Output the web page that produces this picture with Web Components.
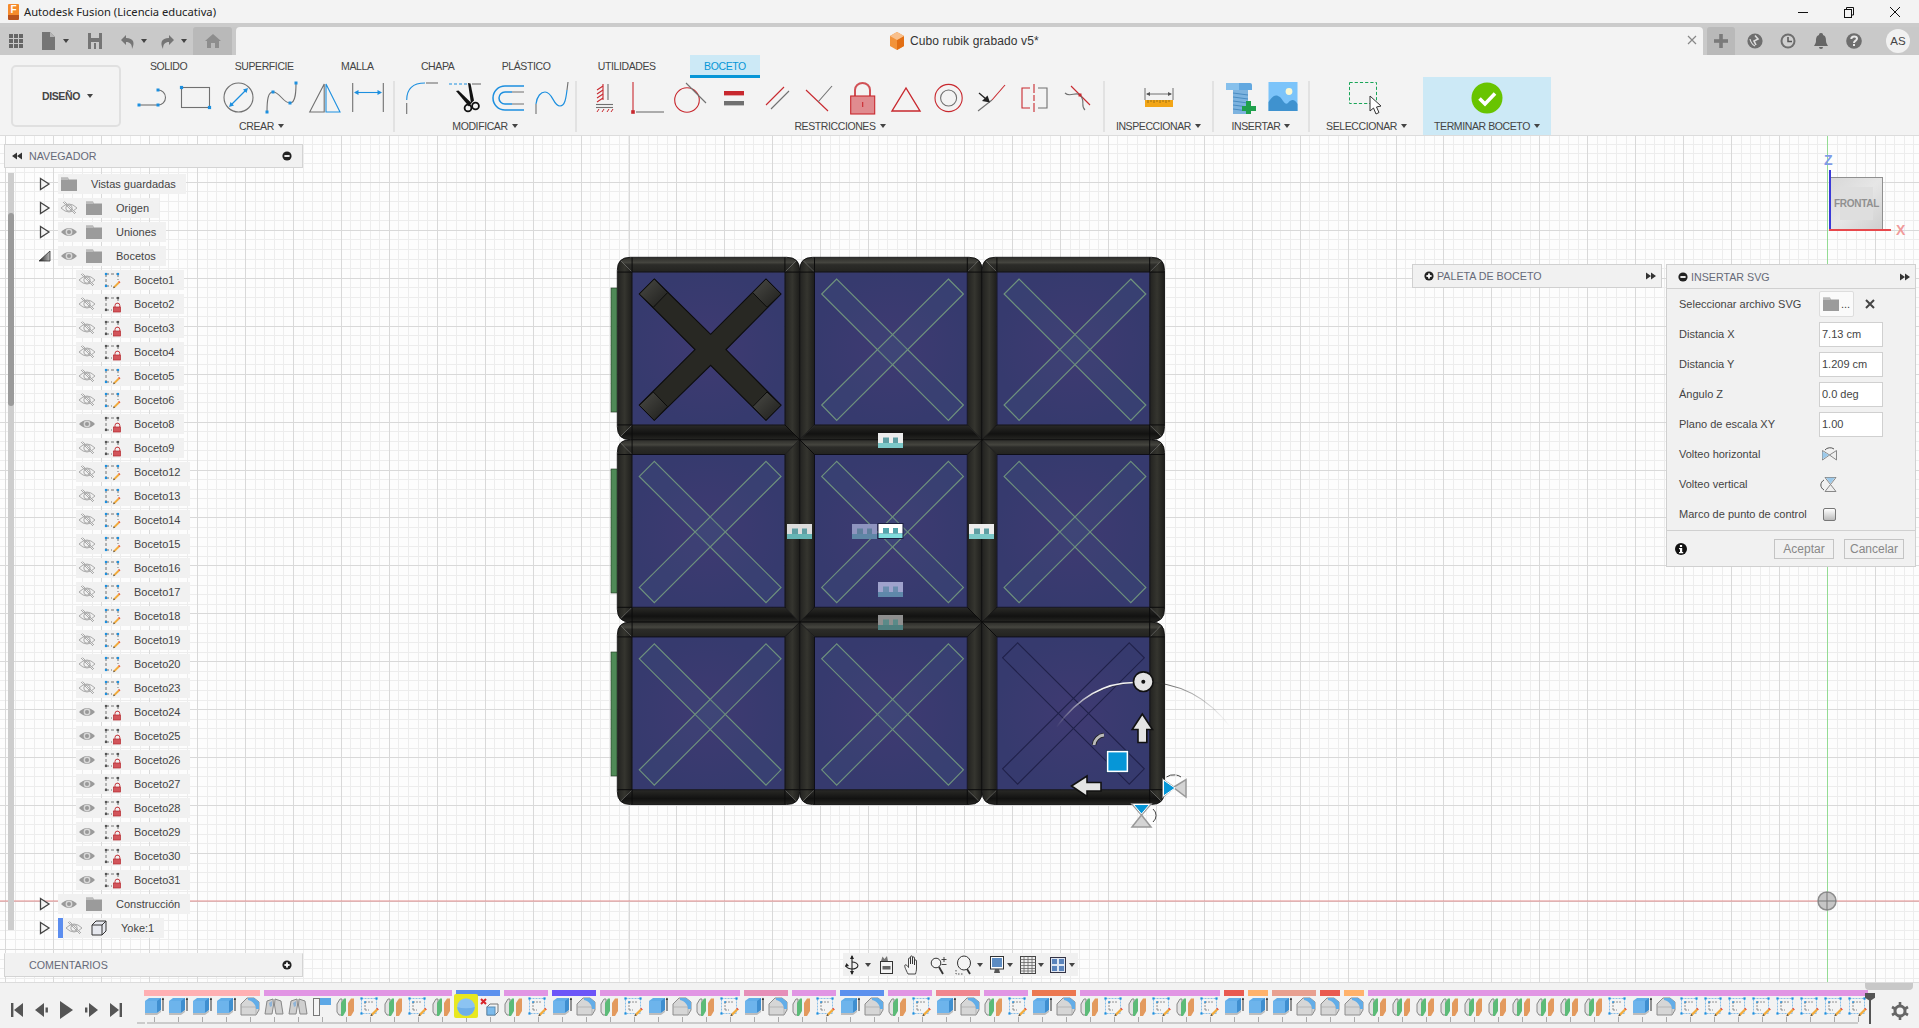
<!DOCTYPE html>
<html lang="es">
<head>
<meta charset="utf-8">
<title>Autodesk Fusion</title>
<style>
    html, body{
        margin: 0;
        height: 100%;
        overflow: hidden;
    }
    body{
        display: flex;
        flex-direction: column;
        background: #f3f3f3;
        font-family: "Liberation Sans", Arial, sans-serif;
        color: #3c3c3c;
    }
</style>
</head>
<body>
<title-bar>Autodesk Fusion (Licencia educativa)</title-bar>
<doc-strip>Cubo rubik grabado v5*</doc-strip>
<ribbon-bar>
    <ribbon-group label="CREAR" w="265" pad="7" icons="lineArc rect circle spline mirror dimension"></ribbon-group>
    <ribbon-group label="MODIFICAR" w="182" pad="11" icons="fillet scissors offset blueSpline"></ribbon-group>
    <ribbon-group label="RESTRICCIONES" w="528" pad="12" icons="cHoriz cCoin cTan cEqual cPar cPerp cLock cTri cConc cMid cSym cCurv"></ribbon-group>
    <ribbon-group label="INSPECCIONAR" w="109" pad="38" icons="ruler"></ribbon-group>
    <ribbon-group label="INSERTAR" w="96" pad="11" icons="bolt picture"></ribbon-group>
    <ribbon-group label="SELECCIONAR" w="113" pad="39" icons="select" plain></ribbon-group>
    <finish-button>TERMINAR BOCETO</finish-button>
</ribbon-bar>
<view-port>
    <rubik-view></rubik-view>
    <view-cube>FRONTAL</view-cube>
    <nav-panel></nav-panel>
    <side-bar-title class="comments" icon="plus">COMENTARIOS</side-bar-title>
    <sketch-palette>PALETA DE BOCETO</sketch-palette>
    <svg-dialog></svg-dialog>
    <nav-toolbar></nav-toolbar>
</view-port>
<time-line></time-line>

<script>
    const RED = '#c8282e', GR = '#707070', BL = '#1c8fdf';
    const sq = (x, y, s = 4, c = BL) => `<rect x="${x - s / 2}" y="${y - s / 2}" width="${s}" height="${s}" fill="${c}"/>`;
    const ln = (x1, y1, x2, y2, c = GR, w = 1.1) => `<line x1="${x1}" y1="${y1}" x2="${x2}" y2="${y2}" stroke="${c}" stroke-width="${w}"/>`;
    const pencil = `<path d="M8 19l1-3 7-7 2 2-7 7z" fill="#f2ab3c"/><path d="M15.5 9.5l1-1 2 2-1 1z" fill="#e8413c"/><path d="M8 19l1-3 2 2z" fill="#555"/>`;
    const sketchFrame = c => `<path d="M2 2H14M2 2V14M14 2v6M2 14h6" fill="none" stroke="#666" stroke-width=".9" stroke-dasharray="3 2"/>` + sq(2, 2, 2.2, c) + sq(14, 2, 2.2, c) + sq(2, 14, 2.2, c);
    const eyeShape = `M0 8Q8 0 16 8Q8 16 0 8Z`;

    // every icon: [width, height, svg body]
    const ICONS = {
        lineArc: [32, 32, ln(2, 23, 21, 23) + `<path d="M21 8A7.5 7.5 0 0 1 21 23" fill="none" stroke="${GR}" stroke-width="1.1"/>` + sq(2, 23, 3) + sq(21, 23, 3) + sq(21, 8, 3)],
        rect: [32, 32, `<rect x="1.5" y="5.5" width="28" height="20" fill="none" stroke="${GR}" stroke-width="1.1"/>` + sq(1.5, 5.5, 3.2) + sq(29.5, 25.5, 3.2)],
        circle: [32, 32, `<circle cx="15.5" cy="15.5" r="14.5" fill="none" stroke="${GR}" stroke-width="1.1"/>` + ln(8, 23, 23, 8, BL, 1.2) + `<path d="M6 25l1.5-5 3.5 3.5zM25 6l-1.5 5-3.5-3.5z" fill="${BL}"/>`],
        spline: [32, 32, `<path d="M1 30C1 18 2 10 7 10C14 10 17 21 24 21C30 21 30 8 30 1" fill="none" stroke="${GR}" stroke-width="1.1"/>` + sq(1, 30, 3) + sq(7, 10, 3) + sq(24, 21, 3) + sq(30, 1, 3)],
        mirror: [32, 32, `<path d="M.7 30L15.2 2V30Z" fill="none" stroke="${GR}" stroke-width="1.1"/><path d="M17 2L31 30H17Z" fill="none" stroke="${BL}" stroke-width="1.1"/>`],
        dimension: [32, 32, ln(.7, 1, .7, 30) + ln(31.3, 1, 31.3, 30) + ln(3, 10.5, 29, 10.5, BL, 1.1) + `<path d="M2 10.5l4.5-2.5v5zM30 10.5l-4.5-2.5v5z" fill="${BL}"/>`],
        fillet: [32, 32, ln(.7, 21, .7, 32) + `<path d="M.7 18Q.7 1 19 1" fill="none" stroke="${BL}" stroke-width="1.1"/>` + ln(20, 1, 32, 1)],
        scissors: [32, 32, `<path d="M0 2H18" stroke="${BL}" stroke-width="1.1" stroke-dasharray="3 2"/>` + ln(23, 2, 32, 2) + `<path d="M19 1l2.5 .5 3.5 17-3 3z" fill="#111"/><path d="M7 9l2.5-.5 13 12.5-2.5 3.5z" fill="#111"/><circle cx="19" cy="26" r="3.4" fill="none" stroke="#111" stroke-width="1.8"/><circle cx="26.5" cy="24" r="3.4" fill="none" stroke="#111" stroke-width="1.8"/>`],
        offset: [32, 32, `<path d="M32 4H13A12 12 0 0 0 13 28H32" fill="none" stroke="${BL}" stroke-width="1.5"/><path d="M20 10H13A6 6 0 0 0 13 22H20" fill="none" stroke="${BL}" stroke-width="1.5"/><path d="M20 10H32M20 22H32" stroke="${GR}" stroke-width="1.1"/>`],
        blueSpline: [33, 33, `<path d="M1 32V22" stroke="${GR}" stroke-width="1.1"/><path d="M1 22C2 14 6 10 10 10C18 10 18 24 25 24C30 24 31 16 32 8" fill="none" stroke="${BL}" stroke-width="1.2"/><path d="M32 8Q32.5 4 33 0" stroke="${GR}" fill="none" stroke-width="1.1"/>`],
        cHoriz: [32, 32, ln(19, 2, 19, 18) + ln(14, 2, 14, 18, RED, 1.1) + `<path d="M14 4L8 8M14 8L8 12M14 12L8 16M14 16L8 20" stroke="${RED}" stroke-width="1.1"/>` + ln(7, 22.5, 24, 22.5, GR, 1.1) + ln(7, 25.5, 24, 25.5, GR, 1.1) + `<path d="M10 27l-2 3M15 27l-2 3M20 27l-2 3M24 27l-2 3" stroke="${RED}" stroke-width="1"/>`],
        cCoin: [32, 32, ln(1, 0, 1, 30, RED) + ln(4, 30, 32, 30) + sq(1, 30, 3.6, RED)],
        cTan: [32, 32, `<circle cx="12" cy="18" r="12.3" fill="none" stroke="${RED}" stroke-width="1.1"/>` + ln(11, 1, 31, 21)],
        cEqual: [32, 32, `<rect x="6" y="9" width="20" height="4.4" fill="${RED}"/><rect x="6" y="19" width="20" height="4.4" fill="${GR}"/>`],
        cPar: [32, 32, ln(23, 5, 5, 23, RED) + ln(28, 9, 10, 27)],
        cPerp: [32, 32, ln(2, 8, 24, 29, RED) + ln(28, 4, 14, 20)],
        cLock: [32, 32, `<path d="M8 14V8A7.5 7 0 0 1 23 8V14" fill="none" stroke="${RED}" stroke-width="2" opacity=".8"/><rect x="3.7" y="14" width="24" height="18" fill="#e08b8f" stroke="${RED}" stroke-width="1.1"/>` + ln(15.7, 20, 15.7, 25, RED, 1.1)],
        cTri: [32, 32, `<path d="M16 6L2 29H30Z" fill="none" stroke="${RED}" stroke-width="1.4"/>`],
        cConc: [32, 32, `<circle cx="15.6" cy="16" r="13.6" fill="none" stroke="${RED}" stroke-width="1.1"/><circle cx="15.6" cy="16" r="8" fill="none" stroke="${GR}" stroke-width="1.1"/>`],
        cMid: [32, 32, ln(29, 3, 16, 18, RED, 1.1) + ln(16, 18, 2, 29) + ln(3, 11, 10, 17, '#222', 1.3) + `<path d="M14 20.5l-8-1.5 5.5-5.5z" fill="#222"/>`],
        cSym: [32, 32, `<path d="M15 2V11M15 13V19M15 21V30" stroke="${RED}" stroke-width="1.1"/><path d="M11 6H3V26H11" fill="none" stroke="${RED}" stroke-width="1.1"/><path d="M19 6H28V26H19" fill="none" stroke="${GR}" stroke-width="1.1"/>`],
        cCurv: [32, 32, ln(9, 4, 28, 23, RED, 1.1) + `<path d="M3 11C8 16 14 9 18 13C24 19 18 24 23 28" fill="none" stroke="${GR}" stroke-width="1.1"/>` + sq(18, 13, 3, RED)],
        ruler: [32, 32, ln(2, 6, 2, 18, GR, 1) + ln(30, 6, 30, 18, GR, 1) + ln(4, 12, 28, 12, GR, 1) + `<path d="M3 12l4-2v4zM29 12l-4-2v4z" fill="#555"/><rect x="2" y="18" width="28" height="7" fill="#f2a516"/><path d="M5 18v3M8 18v2M11 18v3M14 18v2M17 18v3M20 18v2M23 18v3M26 18v2" stroke="#8a6410" stroke-width=".8"/>`],
        bolt: [32, 32, `<path d="M1 1H25A2 2 0 0 1 27 3V8H1Z" fill="#62a8e0"/><path d="M1 1H14V8H1Z" fill="#86c0ec"/><rect x="8" y="8" width="15" height="24" fill="#7db3df"/><path d="M8 11l15 2M8 15l15 2M8 19l15 2M8 23l15 2M8 27l15 2" stroke="#4a8cc2"/><path d="M21 19h5v5h5v5h-5v3h-5v-3h-4v-5h4z" fill="#1fa04c"/>`],
        picture: [30, 30, `<rect x=".5" width="29" height="29" fill="#7cc4fa"/><circle cx="21" cy="9.5" r="3.4" fill="#fbf8d2"/><path d="M.5 29V20C5 13 8 12 12 15C15 18 17 24 20 21C24 16 27 18 29.5 22V29Z" fill="#3f92cf"/>`],
        select: [34, 32, `<rect x=".5" y=".5" width="27" height="21" fill="none" stroke="#18a557" stroke-width="1" stroke-dasharray="3.2 2"/><path d="M21 14V29L24.5 26L27 32L30 30.5L27.5 25L32 24Z" fill="#fff" stroke="#333" stroke-width="1"/>`],
        eyeOn: [16, 16, `<path d="${eyeShape}" fill="#9a9a9a"/><circle cx="8" cy="8" r="3.4" fill="#d8d8d8"/><circle cx="8" cy="8" r="2" fill="#999"/>`],
        eyeOff: [16, 16, `<path d="${eyeShape}" fill="none" stroke="#aaa"/><circle cx="8" cy="8" r="3.2" fill="none" stroke="#aaa"/><path d="M2 2L14 14M3.5 1.5L15 13" stroke="#aaa"/>`],
        folder: [16, 16, `<path d="M0 1.5h7l1 2h8v11.5H0z" fill="#9b9b9b"/><path d="M0 3h7.5" stroke="#eee" stroke-width=".8"/>`],
        sketchLock: [16, 16, sketchFrame('#555') + `<path d="M11 11V9.5a2.4 2.4 0 0 1 4.8 0V11" fill="none" stroke="#c9363c" stroke-width="1"/><rect x="9.5" y="11" width="7" height="5" fill="#d2555b" stroke="#b5282e" stroke-width=".7"/>`],
        sketchPen: [16, 16, sketchFrame(BL) + `<g transform="translate(3.5 3) scale(.7)">${pencil}</g>`],
        solid: [16, 16, `<path d="M1 5L5 1H15V11L11 15H1Z" fill="#e6e8ee" stroke="#333"/><path d="M1 5H11V15M11 5L15 1" fill="none" stroke="#333"/>`],
        minusDot: [10, 10, `<circle cx="5" cy="5" r="4.6" fill="#222"/><rect x="2.4" y="4.1" width="5.2" height="1.8" fill="#fff"/>`],
        plusDot: [10, 10, `<circle cx="5" cy="5" r="4.6" fill="#222"/><rect x="2.4" y="4.1" width="5.2" height="1.8" fill="#fff"/><rect x="4.1" y="2.4" width="1.8" height="5.2" fill="#fff"/>`],
        backTwo: [10, 8, `<path d="M0 4l5-3.5v7zM5 4l5-3.5v7z" fill="#333"/>`],
        foreTwo: [10, 8, `<path d="M0 .5l5 3.5-5 3.5zM5 .5l5 3.5-5 3.5z" fill="#333"/>`],
        arrowOpen: [12, 14, `<path d="M1.5 1.5L10 7L1.5 12.5Z" fill="#f4f4f4" stroke="#444" stroke-width="1.3"/>`],
        arrowDown: [12, 12, `<defs><linearGradient id="g" x1="0" y1="0" x2="1" y2="0"><stop offset="0" stop-color="#222"/><stop offset="1" stop-color="#bbb"/></linearGradient></defs><path d="M0 11L11 1V11Z" fill="url(#g)" stroke="#333" stroke-width=".8"/>`],
        flipH: [15, 15, `<path d="M.5 3.5L7.5 8L14.5 3.5V13L7.5 8L.5 13Z" fill="#eee" stroke="#888"/><path d="M.5 4.5L7 8L.5 12Z" fill="#9cc9ea"/><path d="M3 3A6 5 0 0 1 12 2" fill="none" stroke="#555"/>`],
        flipV: [15, 15, `<path d="M3 .5H14L8.5 7.5L14 14.5H3L8.5 7.5Z" fill="#eee" stroke="#888"/><path d="M4 .8H13L8.5 6.5Z" fill="#9cc9ea"/><path d="M2 3A7 6 0 0 0 2 13" fill="none" stroke="#555"/>`],
        // timeline
        tE: [20, 20, `<path d="M1 4L5 1H17V13L13 16H1Z" fill="#62ade8"/><path d="M13 4L17 1V13L13 16Z" fill="#3f8fd0"/><path d="M1 4H13V16H1Z" fill="#6db4ec"/><path d="M1 16H13L17 13V15L13 18H1Z" fill="#bdbdbd"/><path d="M19 14V1" stroke="#333"/><path d="M17.7 3L19 .5L20 3Z" fill="#333"/>`],
        tF: [20, 20, `<path d="M1 7L7 1H14L19 5V13L16 18H1Z" fill="#d6d6d6" stroke="#8c8c8c"/><path d="M16 18V10H1" fill="none" stroke="#aaa" stroke-width=".7"/><path d="M8 1H14L19 5V12H16C16 8 13 4 8 3Z" fill="#62ade8"/>`],
        tM: [20, 20, `<path d="M1 17L3 4L9 2L9.5 8L8 17Z" fill="#cfcfcf" stroke="#888"/><path d="M19 17L17 4L11 2L10.5 8L12 17Z" fill="#cfcfcf" stroke="#888"/><path d="M5 6L8 4V9L6 10Z" fill="#8fb4d8"/>`],
        tG: [20, 20, `<rect x="1.5" y="1.5" width="6" height="17" fill="#f4f4f4" stroke="#777"/><rect x="8" y="1" width="11" height="7" fill="#5da8e6"/>`],
        tP: [20, 20, `<path d="M1 7L4 2H6V18H3L1 15Z" fill="#e2e2e2" stroke="#888"/><path d="M5 6L8 1.5H10V14L7 19H5Z" fill="#5cbb78"/><path d="M12 6L15 1.5H18V14L15 19H12Z" fill="#e39a5e"/>`],
        tS: [20, 20, `<rect x="1.5" y="1.5" width="15" height="15" fill="#f4f4f4" stroke="#8abfe8" stroke-dasharray="2 1"/><path d="M5 5H13M5 5V13M5 13H9" stroke="#777" stroke-width=".8" stroke-dasharray="2 1" fill="none"/>` + sq(1.5, 1.5, 2.2) + sq(16.5, 1.5, 2.2) + sq(1.5, 16.5, 2.2) + sq(5, 5, 1.6) + `<g transform="translate(4 4) scale(.8)">${pencil}</g>`],
        tO: [20, 20, `<circle cx="10" cy="10" r="8.8" fill="#8bc3f2"/><path d="M1.2 10A8.8 8.8 0 0 0 18.8 10A12 4 0 0 1 1.2 10Z" fill="#6fafe8"/>`],
        tD: [20, 20, `<path d="M1 2L6 7M6 2L1 7" stroke="#d8252b" stroke-width="2"/><path d="M7 10L10 7H18V15L15 18H7Z" fill="#f2f2f2" stroke="#777"/><rect x="7" y="10" width="8" height="8" fill="#7cbbec" stroke="#5a8db5"/>`],
        // toolbars
        grid: [14, 14, Array.from({length: 9}, (_, i) => `<rect x="${(i % 3) * 5}" y="${Math.floor(i / 3) * 5}" width="4" height="4" fill="#666"/>`).join('')],
        doc: [14, 18, `<path d="M0 0H8L13 5V18H0Z" fill="#757575"/><path d="M8 0V5H13Z" fill="#b4b4b4"/>`],
        save: [14, 16, `<path d="M0 0H14V16H0Z" fill="#757575"/><rect x="3" y="0" width="8" height="5" fill="#c9c9c9"/><rect x="3" y="9" width="8" height="7" fill="#c9c9c9"/><rect x="6" y="10" width="2" height="6" fill="#757575"/>`],
        undo: [14, 15, `<path d="M5 1L0 6L5 11V8C9 8 11 10 11 15C14 9 13 4 5 4Z" fill="#757575"/>`],
        redo: [14, 15, `<path d="M9 1L14 6L9 11V8C5 8 3 10 3 15C0 9 1 4 9 4Z" fill="#757575"/>`],
        home: [16, 14, `<path d="M8 0L16 7H14V14H10V9H6V14H2V7H0Z" fill="#8d8d8d"/>`],
        plus: [14, 14, `<rect y="5.2" width="14" height="3.6" fill="#7a7a7a"/><rect x="5.2" width="3.6" height="14" fill="#7a7a7a"/>`],
        sync: [16, 16, `<circle cx="8" cy="8" r="7.6" fill="#6e6e6e"/><path d="M8 2.5L11 6L7 8L9 12" fill="none" stroke="#ddd" stroke-width="1.6"/><path d="M3 6Q4 11 8 13" fill="none" stroke="#ddd" stroke-width="1.2"/>`],
        clock: [16, 16, `<circle cx="8" cy="8" r="7.5" fill="#6e6e6e"/><circle cx="8" cy="8" r="5.5" fill="#cfcfcf"/><path d="M8 4V8.5H12" fill="none" stroke="#555" stroke-width="1.5"/>`],
        bell: [14, 16, `<path d="M7 0C9 0 9 1.5 9 2C12 3 12 6 12 8C12 10 13 11 14 13H0C1 11 2 10 2 8C2 6 2 3 5 2C5 1.5 5 0 7 0Z" fill="#666"/><path d="M5 14H9A2 2 0 0 1 5 14Z" fill="#666"/>`],
        help: [16, 16, `<circle cx="8" cy="8" r="7.8" fill="#6e6e6e"/><path d="M5.3 6C5.3 2.6 11 2.8 11 5.8C11 7.6 8 7.7 8 10" fill="none" stroke="#e8e8e8" stroke-width="2"/><rect x="7" y="11" width="2" height="2" fill="#e8e8e8"/>`],
        cube: [14, 18, `<path d="M7 0L14 4V14L7 18L0 14V4Z" fill="#f2933a"/><path d="M7 8L14 4V14L7 18Z" fill="#e26f14"/><path d="M7 0L14 4L7 8L0 4Z" fill="#f9c08c"/>`],
        info: [12, 12, `<circle cx="6" cy="6" r="6" fill="#111"/><rect x="4.9" y="2" width="2.2" height="2" fill="#fff"/><path d="M4 5H7.2V9H8.2V10.2H4V9H5V6.2H4Z" fill="#fff"/>`],
        first: [12, 14, `<rect width="2.4" height="14" fill="#555"/><path d="M12 0V14L3 7Z" fill="#555"/>`],
        prev: [13, 14, `<path d="M9 0V14L0 7Z" fill="#555"/><rect x="10.5" y="4.5" width="2.4" height="5" fill="#555"/>`],
        play: [13, 18, `<path d="M0 0L13 9L0 18Z" fill="#555"/>`],
        next: [13, 14, `<rect y="4.5" width="2.4" height="5" fill="#555"/><path d="M4 0V14L13 7Z" fill="#555"/>`],
        last: [12, 14, `<path d="M0 0V14L9 7Z" fill="#555"/><rect x="9.6" width="2.4" height="14" fill="#555"/>`],
        gear: [16, 18, `<circle cx="8" cy="9" r="5" fill="none" stroke="#666" stroke-width="3"/><path d="M8 0V4M8 14V18M0 5L3.5 7M12.5 11L16 13M0 13L3.5 11M12.5 7L16 5" stroke="#666" stroke-width="2.6"/>`],
        orbit: [18, 20, `<path d="M9 1V19" stroke="#222" stroke-width="1.1"/><path d="M9 0l-2 4h4zM9 20l-2-4h4z" fill="#222"/><path d="M3 10A6 3.5 0 1 0 9 7" fill="none" stroke="#222" stroke-width="1.1"/><path d="M2 12l1.5-4 2.5 3z" fill="#222"/>`],
        camera: [18, 20, `<rect x="3.5" y="6.5" width="12" height="12" fill="#f4f4f4" stroke="#333"/><rect x="5.5" y="11" width="8" height="3.5" fill="#666"/><path d="M4 6L5.5 1.5L7.5 4L10 1L11 6Z" fill="#777"/>`],
        hand: [18, 20, `<path d="M5 19C3 15 1 11 2 10C3 9 4.5 11 5.5 12.5V4C5.5 2.5 7.5 2.5 7.5 4V9V2C7.5 .5 9.5 .5 9.5 2V9V3C9.5 1.5 11.5 1.5 11.5 3V10V6C11.5 4.5 13.5 4.5 13.5 6V13C13.5 16 13 17 12.5 19Z" fill="#f4f4f4" stroke="#333" stroke-width=".9"/>`],
        zoom: [18, 20, `<circle cx="7" cy="8" r="4.8" fill="#f4f4f4" stroke="#333"/><path d="M10 12L14 19" stroke="#333" stroke-width="1.8"/><path d="M15 2V7M12.5 4.5H17.5M12.5 9.5H17.5" stroke="#333" stroke-width=".9"/>`],
        fit: [18, 20, `<ellipse cx="9" cy="8" rx="6.5" ry="7" fill="#f4f4f4" stroke="#333"/><path d="M12 14L15 19" stroke="#333" stroke-width="1.8"/><path d="M1 15V19H8" fill="none" stroke="#555" stroke-dasharray="1.5 1.5"/>`],
        display: [18, 20, `<rect x="2.5" y="1.5" width="13" height="12.5" fill="#fff" stroke="#333"/><rect x="4" y="3" width="10" height="9" fill="#5d8cc2"/><path d="M7 14H11L12 18H6Z" fill="#555"/>`],
        gridView: [18, 20, `<rect x="1.5" y="1.5" width="15" height="17" fill="#eee" stroke="#444"/><path d="M1.5 4.5H16.5M1.5 7.5H16.5M1.5 10.5H16.5M1.5 13.5H16.5M1.5 16H16.5M5 1.5V18.5M9 1.5V18.5M13 1.5V18.5" stroke="#666" stroke-width=".8"/>`],
        views: [18, 20, `<rect x="1.5" y="2.5" width="15" height="15" fill="#dfe6f2" stroke="#334"/><rect x="3" y="4" width="5" height="5" fill="#5a83bb"/><rect x="10" y="4" width="5" height="5" fill="#5a83bb"/><rect x="3" y="11" width="5" height="5" fill="#5a83bb"/><rect x="10" y="11" width="5" height="5" fill="#5a83bb"/>`]
    };

    const svgFor = name => {
        const [w, h, body] = ICONS[name];
        return `<svg width="${w}" height="${h}" viewBox="0 0 ${w} ${h}" style="display:block;overflow:visible">${body}</svg>`;
    };

    // base class, all the elements below write their shadow root through this
    class FuBase extends HTMLElement{
        paint(css, html){
            this.attachShadow({ mode: 'open' }).innerHTML = `<style>${css}</style>${html}`;
        }
    }

    customElements.define('fu-icon', class extends FuBase{
        connectedCallback(){
            const [w, h] = ICONS[this.getAttribute('name')];
            this.paint(`:host{display:block;flex:none;width:${w}px;height:${h}px}`, svgFor(this.getAttribute('name')));
        }
    });

    customElements.define('fu-caret', class extends FuBase{
        connectedCallback(){
            this.paint(`:host{display:inline-block;flex:none;width:0;height:0;border-left:3px solid transparent;border-right:3px solid transparent;border-top:4px solid #444}`, '');
        }
    });

    customElements.define('title-bar', class extends FuBase{
        connectedCallback(){
            this.paint(`
                :host{display:flex;flex:none;align-items:center;height:23px;background:#f3f3f3;font:11.2px "Noto Sans","Liberation Sans",sans-serif;color:#222}
                .logo{width:11px;height:16px;margin:0 5px 0 8px;background:linear-gradient(#f58a2c 70%,#b9521c 70%);border-radius:1px;color:#fff;font:bold 10px/11px "Liberation Sans",sans-serif;text-align:center}
                .win{margin-left:auto;display:flex;align-items:center;gap:34px;padding-right:18px}
                .win svg{display:block}
            `, `
                <div class="logo">F</div>
                <slot></slot>
                <div class="win">
                    <svg width="12" height="12"><path d="M1 6.5H11" stroke="#111"/></svg>
                    <svg width="12" height="12"><rect x="1.5" y="3.5" width="7" height="8" fill="none" stroke="#111"/><path d="M3.5 3.5V1.5H10.5V9H8.5" fill="none" stroke="#111"/></svg>
                    <svg width="12" height="12"><path d="M1 1L11 11M11 1L1 11" stroke="#111"/></svg>
                </div>
            `);
        }
    });

    customElements.define('doc-strip', class extends FuBase{
        connectedCallback(){
            this.paint(`
                :host{display:flex;flex:none;height:28px;border-top:4px solid #cbcbcb;background:#c9c9c9}
                .tools{display:flex;align-items:center;width:193px;flex:none}
                .tools fu-icon{margin-left:var(--m)}
                .tools fu-caret{margin-left:var(--m)}
                .home{width:39px;flex:none;background:#b9b9b9;display:flex;align-items:center;justify-content:center;border-radius:3px 3px 0 0}
                .tab{flex:none;width:1466.5px;margin-left:4px;background:#f3f3f3;border-radius:4px 4px 0 0;display:flex;align-items:center;position:relative;font-size:12px;letter-spacing:.12px;color:#333}
                .name{margin-left:654px;display:flex;align-items:center;gap:6px}
                .x{position:absolute;right:6px;top:8px}
                .right{display:flex;align-items:center;flex:1}
                .add{width:28px;height:28px;background:#b9b9b9;margin-left:4.5px;display:flex;align-items:center;justify-content:center;border-radius:3px 3px 0 0}
                .av{width:24px;height:24px;border-radius:50%;background:#f1f1f1;font-size:11.5px;line-height:24px;text-align:center;margin-left:24px;color:#444}
            `, `
                <div class="tools">
                    <fu-icon name="grid" style="--m:9px"></fu-icon>
                    <fu-icon name="doc" style="--m:19px"></fu-icon>
                    <fu-caret style="--m:7px"></fu-caret>
                    <fu-icon name="save" style="--m:19px"></fu-icon>
                    <fu-icon name="undo" style="--m:19px"></fu-icon>
                    <fu-caret style="--m:6px"></fu-caret>
                    <fu-icon name="redo" style="--m:13px"></fu-icon>
                    <fu-caret style="--m:7px"></fu-caret>
                </div>
                <div class="home"><fu-icon name="home"></fu-icon></div>
                <div class="tab">
                    <div class="name"><fu-icon name="cube"></fu-icon><slot></slot></div>
                    <svg class="x" width="10" height="10"><path d="M1 1L9 9M9 1L1 9" stroke="#888" stroke-width="1.2"/></svg>
                </div>
                <div class="right">
                    <div class="add"><fu-icon name="plus"></fu-icon></div>
                    <fu-icon name="sync" style="margin-left:12px"></fu-icon>
                    <fu-icon name="clock" style="margin-left:17px"></fu-icon>
                    <fu-icon name="bell" style="margin-left:18px"></fu-icon>
                    <fu-icon name="help" style="margin-left:18px"></fu-icon>
                    <div class="av">AS</div>
                </div>
            `);
        }
    });

    customElements.define('ribbon-bar', class extends FuBase{
        connectedCallback(){
            const tabs = ['SOLIDO', 'SUPERFICIE', 'MALLA', 'CHAPA', 'PLÁSTICO', 'UTILIDADES', 'BOCETO'];
            this.paint(`
                :host{display:flex;flex:none;height:81px;box-sizing:border-box;border-bottom:1px solid #dcdcdc;background:#f3f3f3;font-size:10.5px;letter-spacing:-.4px}
                .design{flex:none;box-sizing:border-box;width:110px;height:62px;margin:10px 9px 0 11px;border:2px solid #e0e0e0;border-radius:5px;display:flex;align-items:center;justify-content:center;gap:7px;font-weight:bold;font-size:10.5px;color:#444;padding-left:3px}
                .main{flex:1;display:flex;flex-direction:column}
                .tabs{display:flex;height:23px;gap:23.4px;padding-left:8px;flex:none}
                .tabs div{padding:0 12px;line-height:23px;color:#444}
                .tabs .on{color:#0696d7;background:#cce9f6;border-bottom:3px solid #0696d7;height:20px;padding:0 14px;margin-left:-1px}
                .groups{display:flex}
            `, `
                <div class="design">DISEÑO <fu-caret></fu-caret></div>
                <div class="main">
                    <div class="tabs">${tabs.map((t, i) => `<div class="${i == 6 ? 'on' : ''}">${t}</div>`).join('')}</div>
                    <div class="groups"><slot></slot></div>
                </div>
            `);
        }
    });

    customElements.define('ribbon-group', class extends FuBase{
        connectedCallback(){
            const icons = this.getAttribute('icons').split(' ');
            this.paint(`
                :host{display:block;flex:none;box-sizing:border-box;width:${this.getAttribute('w')}px;height:51px;margin-top:3px;padding-top:1px;${this.hasAttribute('plain') ? '' : 'border-right:2px solid #e2e2e2;'}}
                .row{display:flex;height:32px;gap:11px;padding-left:${this.getAttribute('pad')}px}
                .label{display:flex;align-items:center;justify-content:center;gap:4px;height:14px;margin-top:5px;color:#444}
            `, `
                <div class="row">${icons.map(n => `<fu-icon name="${n}"></fu-icon>`).join('')}</div>
                <div class="label">${this.getAttribute('label')} <fu-caret></fu-caret></div>
            `);
        }
    });

    customElements.define('finish-button', class extends FuBase{
        connectedCallback(){
            this.paint(`
                :host{display:flex;flex:none;flex-direction:column;align-items:center;box-sizing:border-box;width:128px;height:58px;margin-top:-1px;padding-top:5px;background:#cce9f6;color:#444}
                svg{display:block}
                .label{display:flex;align-items:center;gap:4px;margin-top:5px;height:14px}
            `, `
                <svg width="32" height="32"><circle cx="16" cy="16" r="15.5" fill="#68c400"/><path d="M8.5 16.5L14 22L24 11.5" fill="none" stroke="#fff" stroke-width="3.6"/></svg>
                <div class="label"><slot></slot> <fu-caret></fu-caret></div>
            `);
        }
    });

    customElements.define('view-port', class extends FuBase{
        connectedCallback(){
            const line = (deg, c, at, step) => `repeating-linear-gradient(${deg}deg,${c} ${at}px,${c} ${at + 1}px,transparent ${at + 1}px,transparent ${at + step}px)`;
            this.paint(`
                :host{display:block;position:relative;flex:1;min-height:0;overflow:hidden;background-color:#fdfdfd;
                    background-image:${line(90, '#d9d9d9', 5.28, 47.94)},${line(180, '#d9d9d9', 45.9, 47.94)},${line(90, '#ededed', 5.28, 9.588)},${line(180, '#ededed', 7.55, 9.588)}}
            `, `<slot></slot>`);
        }
    });

    customElements.define('rubik-view', class extends FuBase{
        connectedCallback(){
            const X0 = 617.3, Y0 = 257.3, S = 182.4, F = 14.8, R = 13;
            let out = '';
            for(let r = 0; r < 3; r++){
                for(let c = 0; c < 3; c++){
                    out += this.cell(X0 + c * S, Y0 + r * S, S, F, R, r, c);
                }
            }
            // green tabs on the left side of the cube
            for(const y of [288, 469, 652]){
                out += `<rect x="611" y="${y}" width="6" height="124" fill="#4f8a57" stroke="#20351f" stroke-width=".6"/>`;
            }
            const notch = (x, y, top, band, teeth, edge) => `<g transform="translate(${x} ${y})"><rect width="25" height="10" fill="${top}"/><rect y="10" width="25" height="5" fill="${band}"/><path d="M5 10V4.5H11V10H15V4.5H20V10" fill="${teeth}"/>${edge ? `<rect width="25" height="15" fill="none" stroke="${edge}"/>` : ''}</g>`;
            out += notch(878, 433, '#ececec', '#7cc8c8', '#5f9ea3')
                + notch(787, 524, '#dcdcdc', '#66b5b5', '#5f9ea3')
                + notch(852, 524, '#8f94bf', '#5f86a6', '#5f7f9d')
                + notch(878, 523.5, '#fff', '#7fdcdc', '#52a5ac', '#1c2040')
                + notch(969, 524, '#ececec', '#7cc8c8', '#5f9ea3')
                + notch(878, 582, '#9fa2cc', '#5f88aa', '#6a8cae')
                + notch(878, 615, '#8f8f8f', '#4f7f7f', '#5a8a88');
            out += `
                <path d="M1056.7 726.7Q1090 682 1143 682Q1196 682 1230 726.7" fill="none" stroke="url(#arcDark)" stroke-width="1.1"/>
                <path d="M1056.7 726.7Q1090 682 1135 682.5" fill="none" stroke="url(#arcLight)" stroke-width="1.4"/>
                <circle cx="1143.3" cy="681.7" r="9.8" fill="#e4e4e4" stroke="#111" stroke-width="1.6"/>
                <circle cx="1143.3" cy="681.7" r="2" fill="#111"/>
                <path d="M1142.3 714L1152.5 729.5H1146.8V742.5H1138V729.5H1132.2Z" fill="#e4e4e4" stroke="#111" stroke-width="1.6"/>
                <path d="M1071.5 786L1087 776V782.5H1101V791H1087V796.5Z" fill="#e4e4e4" stroke="#111" stroke-width="1.6"/>
                <path d="M1094 745A11 11 0 0 1 1104 735" fill="none" stroke="#222" stroke-width="4.5"/>
                <path d="M1094 745A11 11 0 0 1 1104 735" fill="none" stroke="#bbb" stroke-width="2.8"/>
                <rect x="1107.5" y="751.5" width="20" height="20" fill="#0696d7" stroke="#fff" stroke-width="1.8"/>
                <rect x="1106.3" y="750.3" width="22.4" height="22.4" fill="none" stroke="#17375e" stroke-width=".7"/>
                <g transform="translate(1162 776)">
                    <path d="M1 3.5L12 11L24 3.5V21L12 12L1 21Z" fill="#d4d4d4" stroke="#999" stroke-width="1.5"/>
                    <path d="M1.5 4L13 12L1.5 20Z" fill="#0696d7" stroke="#fff" stroke-width="1"/>
                    <path d="M4.5 1A10 7 0 0 1 19 1" fill="none" stroke="#444" stroke-dasharray="9 1"/>
                </g>
                <g transform="translate(1131 803)">
                    <path d="M1 1H20L10.5 12L20 24H1L10.5 12Z" fill="#d4d4d4" stroke="#999" stroke-width="1.5"/>
                    <path d="M2.5 1.5H18.5L10.5 11Z" fill="#0696d7" stroke="#fff" stroke-width="1"/>
                    <path d="M22 6A10 9 0 0 1 22 19" fill="none" stroke="#444"/>
                </g>
            `;
            this.paint(`
                :host{display:block;position:absolute;inset:0}
                svg{display:block}
            `, `
                <svg width="1919" height="846" viewBox="0 136 1919 846">
                    <defs>
                        <linearGradient id="h" x1="0" y1="0" x2="0" y2="1"><stop offset="0" stop-color="#2c2c29"/><stop offset=".35" stop-color="#45453f"/><stop offset=".5" stop-color="#2c2c29"/><stop offset="1" stop-color="#232320"/></linearGradient>
                        <linearGradient id="b" x1="0" y1="0" x2="0" y2="1"><stop offset="0" stop-color="#2a2a27"/><stop offset=".6" stop-color="#121211"/><stop offset="1" stop-color="#262623"/></linearGradient>
                        <linearGradient id="v" x1="0" y1="0" x2="1" y2="0"><stop offset="0" stop-color="#222220"/><stop offset=".5" stop-color="#35352f"/><stop offset="1" stop-color="#1d1d1b"/></linearGradient>
                        <linearGradient id="cap" x1="0" y1="0" x2="1" y2="1"><stop offset="0" stop-color="#4a4a45"/><stop offset="1" stop-color="#1e1e1c"/></linearGradient>
                        <radialGradient id="blue"><stop offset="0" stop-color="#3f3a72"/><stop offset="1" stop-color="#363a6e"/></radialGradient>
                        <linearGradient id="arcDark" gradientUnits="userSpaceOnUse" x1="1056" y1="0" x2="1230" y2="0"><stop offset="0" stop-color="#333" stop-opacity="0"/><stop offset=".5" stop-color="#222"/><stop offset="1" stop-color="#555" stop-opacity="0"/></linearGradient>
                        <linearGradient id="arcLight" gradientUnits="userSpaceOnUse" x1="1056" y1="0" x2="1135" y2="0"><stop offset="0" stop-color="#eee" stop-opacity="0"/><stop offset=".5" stop-color="#f2f2f2"/><stop offset="1" stop-color="#f2f2f2"/></linearGradient>
                    </defs>
                    <path d="M0 901H1919" stroke="#e58c8c"/>
                    <path d="M1827.5 0V982" stroke="#93dc93"/>
                    <circle cx="1827" cy="901" r="9" fill="#c6c6c6" stroke="#8d8d8d" stroke-width="1.5"/>
                    <path d="M1818 901H1836M1827 892V910" stroke="#777"/>
                    ${out}
                </svg>
            `);
        }

        cell(x, y, S, F, R, r, c){
            const x2 = x + S, y2 = y + S;
            // rounded only where the corner sits on the outer edge of the cube
            const tl = r == 0 || c == 0, tr = r == 0 || c == 2, bl = r == 2 || c == 0, br = r == 2 || c == 2;
            const outline = `M${x + (tl ? R : 0)} ${y}H${x2 - (tr ? R : 0)}${tr ? `Q${x2} ${y} ${x2} ${y + R}` : ''}V${y2 - (br ? R : 0)}${br ? `Q${x2} ${y2} ${x2 - R} ${y2}` : ''}H${x + (bl ? R : 0)}${bl ? `Q${x} ${y2} ${x} ${y2 - R}` : ''}V${y + (tl ? R : 0)}${tl ? `Q${x} ${y} ${x + R} ${y}` : ''}Z`;
            const ix = x + F, iy = y + F, ix2 = x2 - F, iy2 = y2 - F;
            const id = `c${r}${c}`;
            let g = `<clipPath id="${id}"><path d="${outline}"/></clipPath><g clip-path="url(#${id})">
                <polygon points="${x},${y} ${x2},${y} ${ix2},${iy} ${ix},${iy}" fill="url(#h)"/>
                <polygon points="${x},${y2} ${x2},${y2} ${ix2},${iy2} ${ix},${iy2}" fill="url(#b)"/>
                <polygon points="${x},${y} ${ix},${iy} ${ix},${iy2} ${x},${y2}" fill="url(#v)"/>
                <polygon points="${x2},${y} ${ix2},${iy} ${ix2},${iy2} ${x2},${y2}" fill="url(#v)"/>`;
            const seg = (a, b, c2, d) => `<line x1="${a}" y1="${b}" x2="${c2}" y2="${d}" stroke="#0c0c0c" stroke-width="1"/>`;
            g += tl ? seg(ix, y, ix, iy) + seg(x, iy, ix, iy) : seg(x, y, ix, iy);
            g += tr ? seg(ix2, y, ix2, iy) + seg(x2, iy, ix2, iy) : seg(x2, y, ix2, iy);
            g += bl ? seg(ix, y2, ix, iy2) + seg(x, iy2, ix, iy2) : seg(x, y2, ix, iy2);
            g += br ? seg(ix2, y2, ix2, iy2) + seg(x2, iy2, ix2, iy2) : seg(x2, y2, ix2, iy2);
            g += `</g><path d="${outline}" fill="none" stroke="#0c0c0c" stroke-width=".9"/>`;
            g += `<rect x="${ix}" y="${iy}" width="${S - 2 * F}" height="${S - 2 * F}" fill="url(#blue)" stroke="#0e0e18"/>`;

            const P = pts => pts.map(p => `${x + p[0]},${y + p[1]}`).join(' ');
            const a1 = [[37, 21.7], [22, 36.7], [148.7, 163], [163.7, 147.7]];
            const a2 = [[148.7, 21.7], [163.7, 36.7], [37, 163], [22, 147.7]];
            if(r == 0 && c == 0){
                const solid = [[37, 21.7], [93.3, 77], [148.7, 21.7], [163.7, 36.7], [108.7, 92.3], [163.7, 147.7], [148.7, 163], [93.3, 108], [37, 163], [22, 147.7], [77.7, 92.3], [22, 36.7]];
                g += `<polygon points="${P(solid)}" fill="#282823" stroke="#0c0c0c" stroke-width="1.1"/>`;
                const cap = [[37, 21.7], [22, 36.7], [36, 50], [50.3, 35.3]];
                for(const [mx, my] of [[0, 0], [1, 0], [0, 1], [1, 1]]){
                    const pts = cap.map(p => [mx ? 185.7 - p[0] : p[0], my ? 184.7 - p[1] : p[1]]);
                    g += `<polygon points="${P(pts)}" fill="url(#cap)" stroke="#0c0c0c" stroke-width="1"/>`;
                }
            }else if(r == 2 && c == 2){
                const d = a => a.map(p => [p[0] - 1.5, p[1] - 1]);
                g += `<polygon points="${P(d(a1))}" fill="none" stroke="#20214a" stroke-width="1.1"/><polygon points="${P(d(a2))}" fill="none" stroke="#20214a" stroke-width="1.1"/>`;
            }else{
                const arms = [a1, a2];
                g += arms.map(a => `<polygon points="${P(a)}" fill="#3f5a80" fill-opacity=".2" stroke="#6e917d" stroke-width="1.2"/>`).join('');
            }
            return g;
        }
    });

    customElements.define('view-cube', class extends FuBase{
        connectedCallback(){
            this.paint(`
                :host{display:block;position:absolute;left:1830px;top:41px;width:53px;height:53px;box-sizing:border-box;border:1px solid #8f8f8f;background:linear-gradient(135deg,#d8d8d8,#e6e6e6 50%,#cfcfcf)}
                .t{position:absolute;inset:0;display:flex;align-items:center;justify-content:center;font-weight:bold;font-size:10px;letter-spacing:-.3px;color:#909090}
                .inner{position:absolute;left:9px;top:9px;width:33px;height:33px;background:#dedede}
                i{position:absolute;font-style:normal;font-weight:bold;font-size:14px;line-height:14px}
                .zl{position:absolute;left:-2px;top:-8px;width:2px;height:61px;background:#3a3ad8}
                .xl{position:absolute;left:-2px;top:51px;width:62px;height:2px;background:#e8484c}
            `, `
                <div class="inner"></div>
                <div class="t"><slot></slot></div>
                <div class="zl"></div><div class="xl"></div>
                <i style="left:-7px;top:-25px;color:#7f9be8">Z</i>
                <i style="left:65px;top:45px;color:#f09a9a">X</i>
            `);
        }
    });

    customElements.define('side-bar-title', class extends FuBase{
        connectedCallback(){
            const back = this.hasAttribute('back');
            const comments = this.classList.contains('comments');
            this.paint(`
                :host{display:flex;align-items:center;box-sizing:border-box;height:24px;background:#f1f1f1;border:1px solid #d4d4d4;font-size:10.7px;color:#666a78;${comments ? 'position:absolute;left:4px;top:817px;width:299px;border-top-color:#f1f1f1;border-left-color:#d4d4d4;' : 'width:299px;margin-left:4px;'}}
                .a{width:24px;flex:none;display:flex;justify-content:center}
                .r{margin-left:auto;margin-right:10px}
            `, `
                <div class="a">${back ? '<fu-icon name="backTwo"></fu-icon>' : ''}</div>
                <slot></slot>
                <fu-icon class="r" name="${this.getAttribute('icon') == 'plus' ? 'plusDot' : 'minusDot'}"></fu-icon>
            `);
        }
    });

    customElements.define('nav-row', class extends FuBase{
        connectedCallback(){
            const lvl = this.getAttribute('lvl') || 0;
            const arrow = this.getAttribute('arrow');
            const eye = this.getAttribute('eye');
            const kind = this.getAttribute('kind');
            const bar = this.hasAttribute('bar');
            this.paint(`
                :host{display:flex;height:20px;margin-bottom:4px;font-size:11px}
                .a{flex:none;width:${lvl == 1 ? 76 : 58}px;box-sizing:border-box;padding-left:39px;display:flex;align-items:center}
                .bar{width:5px;flex:none;background:#5b8def}
                .p{display:flex;align-items:center;background:#f1f1f1;padding:0 10px 0 3px;color:#444}
                .e{margin-right:9px}
                .k{margin-right:14px}
            `, `
                <div class="a">${arrow ? `<fu-icon name="${arrow == 'open' ? 'arrowDown' : 'arrowOpen'}"></fu-icon>` : ''}</div>
                ${bar ? '<div class="bar"></div>' : ''}
                <div class="p">
                    ${eye ? `<fu-icon class="e" name="${eye == 'on' ? 'eyeOn' : 'eyeOff'}"></fu-icon>` : ''}
                    <fu-icon class="k" name="${kind}"></fu-icon>
                    <slot></slot>
                </div>
            `);
        }
    });

    customElements.define('nav-panel', class extends FuBase{
        connectedCallback(){
            const lock = 'sketchLock', pen = 'sketchPen';
            const sketches = [
                [1, 'off', pen], [2, 'off', lock], [3, 'off', lock], [4, 'off', lock], [5, 'off', pen], [6, 'off', pen],
                [8, 'on', lock], [9, 'off', lock], [12, 'off', pen], [13, 'off', pen], [14, 'off', pen], [15, 'off', pen],
                [16, 'off', pen], [17, 'off', pen], [18, 'off', pen], [19, 'off', pen], [20, 'off', pen], [23, 'off', pen],
                [24, 'on', lock], [25, 'on', lock], [26, 'on', lock], [27, 'on', lock], [28, 'on', lock], [29, 'on', lock],
                [30, 'on', lock], [31, 'on', lock]
            ];
            this.paint(`
                :host{display:block;position:absolute;left:0;top:8px;width:310px}
                .tree{position:relative;margin-top:6px}
                .track{position:absolute;left:8px;top:-1px;width:6px;height:757px;background:#cdcdcd}
                .thumb{position:absolute;left:0;top:40px;width:6px;height:193px;background:#9a9a9a;border-radius:3px}
                nav-row{position:relative}
            `, `
                <side-bar-title back icon="minus">NAVEGADOR</side-bar-title>
                <div class="tree">
                    <div class="track"><div class="thumb"></div></div>
                    <nav-row arrow="right" kind="folder">Vistas guardadas</nav-row>
                    <nav-row arrow="right" eye="off" kind="folder">Origen</nav-row>
                    <nav-row arrow="right" eye="on" kind="folder">Uniones</nav-row>
                    <nav-row arrow="open" eye="on" kind="folder">Bocetos</nav-row>
                    ${sketches.map(s => `<nav-row lvl="1" eye="${s[1]}" kind="${s[2]}">Boceto${s[0]}</nav-row>`).join('')}
                    <nav-row arrow="right" eye="on" kind="folder">Construcción</nav-row>
                    <nav-row arrow="right" eye="off" kind="solid" bar>Yoke:1</nav-row>
                </div>
            `);
        }
    });

    customElements.define('sketch-palette', class extends FuBase{
        connectedCallback(){
            this.paint(`
                :host{display:flex;align-items:center;box-sizing:border-box;position:absolute;left:1412px;top:128px;width:250px;height:24px;background:#f1f1f1;border:1px solid #d0d0d0;font-size:10.7px;color:#666a78;padding:0 5px 0 11px;gap:3px}
                fu-icon:last-child{margin-left:auto}
            `, `<fu-icon name="plusDot"></fu-icon><slot></slot><fu-icon name="foreTwo"></fu-icon>`);
        }
    });

    customElements.define('svg-dialog', class extends FuBase{
        connectedCallback(){
            const rows = [
                ['Distancia X', '7.13 cm'], ['Distancia Y', '1.209 cm'], ['Ángulo Z', '0.0 deg'], ['Plano de escala XY', '1.00']
            ];
            this.paint(`
                :host{display:block;position:absolute;left:1666px;top:128px;box-sizing:border-box;width:250px;height:303px;background:#f1f1f1;border:1px solid #d0d0d0;font-size:11px;color:#444}
                .head{display:flex;align-items:center;gap:3px;height:23px;padding:0 5px 0 11px;border-bottom:1px solid #d0d0d0;font-size:10.7px;color:#666a78}
                .head fu-icon:last-child{margin-left:auto}
                .body{display:grid;grid-template-columns:140px auto;grid-auto-rows:30px;padding:0 0 0 12px;align-items:center;height:240px;box-sizing:border-box}
                input{box-sizing:border-box;width:64px;height:25px;border:1px solid #d0d0d0;background:#fff;font:11px "Liberation Sans",sans-serif;color:#444;padding:0 2px;margin:0;outline:0}
                .pick{display:flex;align-items:center;gap:11px}
                .pick div{box-sizing:border-box;width:35px;height:26px;background:#fafafa;border:1px solid #ddd;border-radius:2px;display:flex;align-items:center;padding-left:3px;gap:2px}
                .box{width:13px;height:13px;box-sizing:border-box;margin-left:4px;border:1px solid #777;border-radius:2px;background:linear-gradient(#fff,#bbb)}
                .flip{margin-left:3px}
                .foot{display:flex;align-items:center;height:37px;box-sizing:border-box;border-top:1px solid #d0d0d0;padding-left:8px;margin-top:1px}
                .foot button{box-sizing:border-box;height:20px;border:1px solid #c4c4c4;background:#f1f1f1;font:12px "Liberation Sans",sans-serif;color:#888;padding:0;margin:0}
            `, `
                <div class="head"><fu-icon name="minusDot"></fu-icon>INSERTAR SVG<fu-icon name="foreTwo"></fu-icon></div>
                <div class="body">
                    <span>Seleccionar archivo SVG</span>
                    <span class="pick"><div><fu-icon name="folder"></fu-icon>...</div>
                        <svg width="10" height="10"><path d="M1 1L9 9M9 1L1 9" stroke="#444" stroke-width="2"/></svg></span>
                    ${rows.map(r => `<span>${r[0]}</span><input value="${r[1]}">`).join('')}
                    <span>Volteo horizontal</span><fu-icon class="flip" name="flipH"></fu-icon>
                    <span>Volteo vertical</span><fu-icon class="flip" name="flipV"></fu-icon>
                    <span>Marco de punto de control</span><div class="box"></div>
                </div>
                <div class="foot">
                    <fu-icon name="info"></fu-icon>
                    <button style="width:60px;margin-left:87px">Aceptar</button>
                    <button style="width:60px;margin-left:10px">Cancelar</button>
                </div>
            `);
        }
    });

    customElements.define('nav-toolbar', class extends FuBase{
        connectedCallback(){
            const items = [
                ['orbit', 0], [0, 4], ['camera', 6], ['hand', 8], ['zoom', 8], ['fit', 8], [0, 4],
                ['display', 5], [0, 1], ['gridView', 6], [0, 1], ['views', 5], [0, 2]
            ];
            this.paint(`
                :host{display:flex;align-items:center;position:absolute;left:843px;top:817px;width:235px;height:23px;background:#f0f0f0;box-sizing:border-box}
            `, items.map(([n, m]) => n
                ? `<fu-icon name="${n}" style="margin-left:${m}px"></fu-icon>`
                : `<fu-caret style="margin-left:${m}px"></fu-caret>`).join(''));
        }
    });

    customElements.define('time-line', class extends FuBase{
        connectedCallback(){
            const seq = 'E E E E F M M G P S P S P O D P S E F P S E F P S E F P S E F P S E F P S E F P S P S P S E E E F F F P P P P P P P P P P S E F S S S S S S S S'.split(' ');
            const PINK = '#e195e4', BLUE = '#5c91ee', RD = '#e95a50', OR = '#ffb26b', SAL = '#e8a090';
            const bars = [
                [5, '#ffb0b3'], [8, PINK], [2, BLUE], [2, PINK], [2, '#6c55f8'], [6, PINK], [2, '#e68fb8'], [2, PINK], [2, BLUE], [2, PINK],
                [2, '#f0868f'], [2, PINK], [2, '#ec7850'], [6, PINK], [1, RD], [1, OR], [2, SAL], [1, RD], [1, OR], [21, PINK]
            ];
            this.paint(`
                :host{display:block;flex:none;position:relative;height:46px;box-sizing:border-box;border-top:1px solid #dcdcdc;background:#f2f2f2}
                .ctrl{position:absolute;left:11px;top:18px;width:111px;height:18px;display:flex;align-items:center;justify-content:space-between}
                .lane{margin-left:144px;display:grid;grid-template-columns:repeat(72,24px);padding-top:7px}
                .bar{height:6px;margin-right:4px}
                .it{width:20px;height:20px;margin-top:1px;position:relative;grid-row:2}
                .it.hi::before{content:'';position:absolute;left:-2px;top:-3px;width:24px;height:24px;background:#e8e820;border-radius:2px}
                .it fu-icon{position:relative}
                .tick{height:5px;width:1px;background:#aaa;margin-left:10px;grid-row:3}
                .base{height:2px;background:#cbcbcb;margin:0 0 0 147px;width:1711px}
                .dash{position:absolute;left:137px;top:39px;width:8px;border-top:2px dashed #cbcbcb}
                .mark{position:absolute;left:1869px;top:15px;width:1.5px;height:26px;background:#555}
                .mark::before{content:'';position:absolute;left:-4px;top:-5px;width:10px;height:8px;background:#555;clip-path:polygon(0 0,100% 0,100% 60%,50% 100%,0 60%)}
                .pill{position:absolute;left:1865px;top:0;width:48px;height:7px;background:#c8c8c8;border-radius:0 0 4px 4px}
                .gear{position:absolute;left:1892px;top:19px}
            `, `
                <div class="ctrl">${['first', 'prev', 'play', 'next', 'last'].map(n => `<fu-icon name="${n}"></fu-icon>`).join('')}</div>
                <div class="lane">
                    ${bars.map(b => `<div class="bar" style="grid-column:span ${b[0]};background:${b[1]}"></div>`).join('')}
                    ${seq.map((s, i) => `<div class="it ${s == 'O' ? 'hi' : ''}" style="grid-column:${i + 1}"><fu-icon name="t${s}"></fu-icon></div>`).join('')}
                    ${seq.map((s, i) => `<div class="tick" style="grid-column:${i + 1}"></div>`).join('')}
                </div>
                <div class="base"></div>
                <div class="dash"></div>
                <div class="pill"></div>
                <div class="mark"></div>
                <fu-icon class="gear" name="gear"></fu-icon>
            `);
        }
    });
</script>
</body>
</html>
